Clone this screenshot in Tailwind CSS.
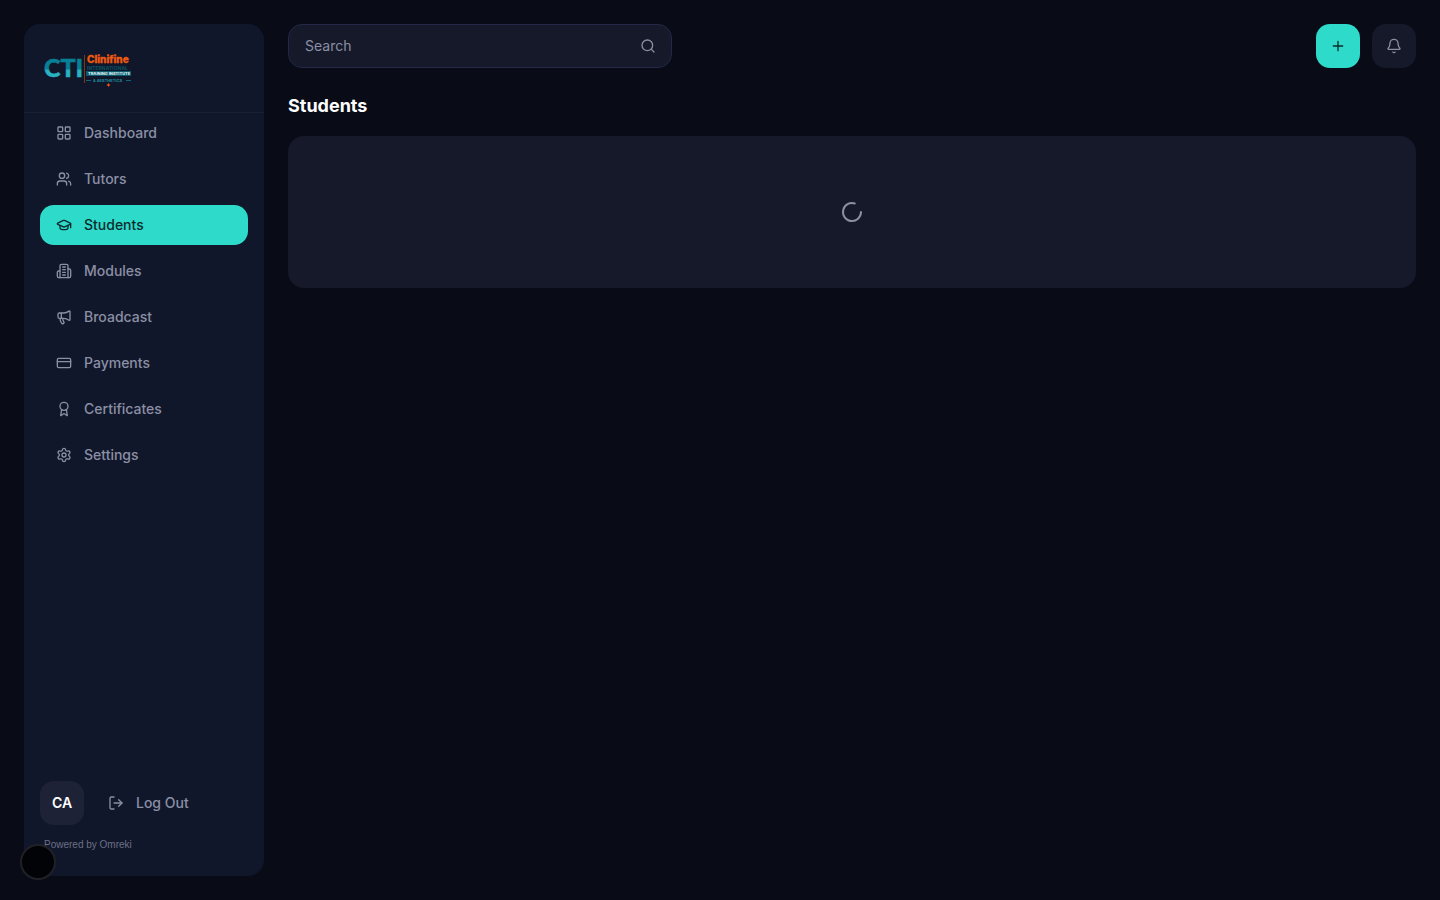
<!DOCTYPE html>
<html lang="en">
  <head>
    <meta charset="UTF-8" />
    <meta name="viewport" content="width=device-width, initial-scale=1.0" />
    <title>Students</title>
    <script src="https://cdn.jsdelivr.net/npm/@tailwindcss/browser@4"></script>
  </head>
  <body class="bg-[#090c17] text-white font-['Inter',sans-serif] antialiased">
    <div class="flex min-h-screen gap-6 p-6">
      <!-- Sidebar -->
      <aside class="flex w-60 shrink-0 flex-col rounded-2xl bg-[#11172a]">
        <div class="border-b border-[#1a2035] px-5 pt-6 pb-4">
          <a href="/" class="block" aria-label="Clinifine Training Institute">
            <svg class="h-12 w-24" viewBox="0 0 96 48">
              <defs>
                <linearGradient id="cti" x1="0" y1="0" x2="0" y2="1">
                  <stop offset="0.55" stop-color="#087f94" />
                  <stop offset="0.62" stop-color="#29b2c2" />
                </linearGradient>
              </defs>
              <text x="0" y="29" fill="url(#cti)" stroke="url(#cti)" stroke-width="0.5" font-family="Lato" font-size="25" font-weight="900">
                CTI
              </text>
              <path d="M40.500 7v28" stroke="#7c351f" stroke-width="1" />
              <text x="43" y="15" fill="#ee5a12" stroke="#ee5a12" stroke-width="0.3" font-family="Inter" font-size="10" font-weight="800">
                Clinifine
              </text>
              <text x="43" y="22" fill="#0b5265" font-family="Inter" font-size="5" font-weight="700">
                INTERNATIONAL
              </text>
              <rect x="42" y="23" width="45" height="5" fill="#0b5a6c" />
              <text x="44" y="27" fill="#d7eef2" font-family="Inter" font-size="4" font-weight="800">
                TRAINING INSTITUTE
              </text>
              <path d="M42 32.500h5M82 32.500h5" stroke="#126578" />
              <text x="49" y="34" fill="#1c8b9c" font-family="Inter" font-size="4" font-weight="700">
                &amp; AESTHETICS
              </text>
              <path d="M64.500 35l.7 1.300 1.300.7-1.300.7-.7 1.300-.7-1.300-1.300-.7 1.300-.7z" fill="#ee5a12" />
            </svg>
          </a>
        </div>

        <!-- Navigation -->
        <nav class="flex flex-col gap-1.5 px-4 text-sm font-medium text-[#8b8fa5]">
          <a href="/dashboard" class="flex h-10 items-center gap-3 rounded-[14px] px-4">
            <svg class="size-4" viewBox="0 0 24 24" fill="none" stroke="currentColor" stroke-width="2" stroke-linecap="round" stroke-linejoin="round">
              <rect x="3" y="3" width="7" height="7" rx="1" />
              <rect x="14" y="3" width="7" height="7" rx="1" />
              <rect x="14" y="14" width="7" height="7" rx="1" />
              <rect x="3" y="14" width="7" height="7" rx="1" />
            </svg>
            Dashboard
          </a>
          <a href="/tutors" class="flex h-10 items-center gap-3 rounded-[14px] px-4">
            <svg class="size-4" viewBox="0 0 24 24" fill="none" stroke="currentColor" stroke-width="2" stroke-linecap="round" stroke-linejoin="round">
              <path d="M16 21v-2a4 4 0 0 0-4-4H6a4 4 0 0 0-4 4v2" />
              <circle cx="9" cy="7" r="4" />
              <path d="M22 21v-2a4 4 0 0 0-3-3.870M16 3.130a4 4 0 0 1 0 7.750" />
            </svg>
            Tutors
          </a>
          <a href="/students" class="flex h-10 items-center gap-3 rounded-[14px] bg-[#2edbca] px-4 text-[#0b2a2c]" aria-current="page">
            <svg class="size-4" viewBox="0 0 24 24" fill="none" stroke="currentColor" stroke-width="2" stroke-linecap="round" stroke-linejoin="round">
              <path d="M21.420 10.922a1 1 0 0 0-.019-1.838L12.830 5.180a2 2 0 0 0-1.660 0L2.600 9.080a1 1 0 0 0 0 1.832l8.570 3.908a2 2 0 0 0 1.660 0z" />
              <path d="M22 10v6" />
              <path d="M6 12.500V16a6 3 0 0 0 12 0v-3.500" />
            </svg>
            Students
          </a>
          <a href="/modules" class="flex h-10 items-center gap-3 rounded-[14px] px-4">
            <svg class="size-4" viewBox="0 0 24 24" fill="none" stroke="currentColor" stroke-width="2" stroke-linecap="round" stroke-linejoin="round">
              <path d="M6 22V4a2 2 0 0 1 2-2h8a2 2 0 0 1 2 2v18Z" />
              <path d="M6 12H4a2 2 0 0 0-2 2v6a2 2 0 0 0 2 2h2" />
              <path d="M18 9h2a2 2 0 0 1 2 2v9a2 2 0 0 1-2 2h-2" />
              <path d="M10 6h4M10 10h4M10 14h4M10 18h4" />
            </svg>
            Modules
          </a>
          <a href="/broadcast" class="flex h-10 items-center gap-3 rounded-[14px] px-4">
            <svg class="size-4" viewBox="0 0 24 24" fill="none" stroke="currentColor" stroke-width="2" stroke-linecap="round" stroke-linejoin="round">
              <path d="M11 6a13 13 0 0 0 8.400-2.800A1 1 0 0 1 21 4v12a1 1 0 0 1-1.600.8A13 13 0 0 0 11 14H5a2 2 0 0 1-2-2V8a2 2 0 0 1 2-2z" />
              <path d="M6 14a12 12 0 0 0 2.400 7.200 2 2 0 0 0 3.200-2.400A8 8 0 0 1 10 14" />
              <path d="M8 6v8" />
            </svg>
            Broadcast
          </a>
          <a href="/payments" class="flex h-10 items-center gap-3 rounded-[14px] px-4">
            <svg class="size-4" viewBox="0 0 24 24" fill="none" stroke="currentColor" stroke-width="2" stroke-linecap="round" stroke-linejoin="round">
              <rect x="2" y="5" width="20" height="14" rx="2" />
              <path d="M2 10h20" />
            </svg>
            Payments
          </a>
          <a href="/certificates" class="flex h-10 items-center gap-3 rounded-[14px] px-4">
            <svg class="size-4" viewBox="0 0 24 24" fill="none" stroke="currentColor" stroke-width="2" stroke-linecap="round" stroke-linejoin="round">
              <path d="m15.477 12.890 1.515 8.526a.5.5 0 0 1-.810.470l-3.580-2.687a1 1 0 0 0-1.197 0l-3.586 2.686a.5.5 0 0 1-.810-.469l1.514-8.526" />
              <circle cx="12" cy="8" r="6" />
            </svg>
            Certificates
          </a>
          <a href="/settings" class="flex h-10 items-center gap-3 rounded-[14px] px-4">
            <svg class="size-4" viewBox="0 0 24 24" fill="none" stroke="currentColor" stroke-width="2" stroke-linecap="round" stroke-linejoin="round">
              <path d="M9.671 4.136a2.340 2.340 0 0 1 4.659 0 2.340 2.340 0 0 0 3.319 1.915 2.340 2.340 0 0 1 2.330 4.033 2.340 2.340 0 0 0 0 3.831 2.340 2.340 0 0 1-2.330 4.033 2.340 2.340 0 0 0-3.319 1.915 2.340 2.340 0 0 1-4.659 0 2.340 2.340 0 0 0-3.320-1.915 2.340 2.340 0 0 1-2.330-4.033 2.340 2.340 0 0 0 0-3.831A2.340 2.340 0 0 1 6.350 6.051a2.340 2.340 0 0 0 3.319-1.915" />
              <circle cx="12" cy="12" r="3" />
            </svg>
            Settings
          </a>
        </nav>

        <!-- Account -->
        <div class="mt-auto px-4 pb-6">
          <div class="flex items-center gap-2">
            <div class="flex size-11 items-center justify-center rounded-[14px] bg-[#1d2236] text-sm font-semibold">CA</div>
            <button type="button" class="flex h-10 items-center gap-3 px-4 text-sm font-medium text-[#8b8fa5]">
              <svg class="size-4" viewBox="0 0 24 24" fill="none" stroke="currentColor" stroke-width="2" stroke-linecap="round" stroke-linejoin="round">
                <path d="M9 21H5a2 2 0 0 1-2-2V5a2 2 0 0 1 2-2h4" />
                <path d="m16 17 5-5-5-5" />
                <path d="M21 12H9" />
              </svg>
              Log Out
            </button>
          </div>
          <p class="mt-3 px-1 font-['Liberation_Sans',sans-serif] text-[10px] leading-[15px] text-[#6c7085]">Powered by Omreki</p>
        </div>
      </aside>

      <!-- Content -->
      <main class="min-w-0 flex-1">
        <header class="flex items-center justify-between">
          <label class="flex h-11 w-96 items-center rounded-[14px] border border-[#232848] bg-[#161929] px-4 text-[#8b8fa5]">
            <input type="text" placeholder="Search" aria-label="Search" class="min-w-0 flex-1 bg-transparent text-sm outline-none placeholder:text-[#8b8fa5]" />
            <svg class="size-4 -mr-px" viewBox="0 0 24 24" fill="none" stroke="currentColor" stroke-width="2" stroke-linecap="round" stroke-linejoin="round">
              <circle cx="11" cy="11" r="8" />
              <path d="m21 21-4.300-4.300" />
            </svg>
          </label>
          <div class="flex gap-3">
            <button type="button" aria-label="Add student" class="flex size-11 items-center justify-center rounded-[14px] bg-[#2edbca] text-[#0b2a2c]">
              <svg class="size-4" viewBox="0 0 24 24" fill="none" stroke="currentColor" stroke-width="2" stroke-linecap="round">
                <path d="M5 12h14M12 5v14" />
              </svg>
            </button>
            <button type="button" aria-label="Notifications" class="flex size-11 items-center justify-center rounded-[14px] bg-[#161929] text-[#8b8fa5]">
              <svg class="size-4" viewBox="0 0 24 24" fill="none" stroke="currentColor" stroke-width="2" stroke-linecap="round" stroke-linejoin="round">
                <path d="M10.268 21a2 2 0 0 0 3.464 0" />
                <path d="M3.262 15.326A1 1 0 0 0 4 17h16a1 1 0 0 0 .740-1.673C19.410 13.956 18 12.499 18 8A6 6 0 0 0 6 8c0 4.499-1.411 5.956-2.738 7.326" />
              </svg>
            </button>
          </div>
        </header>

        <h1 class="mt-6 text-lg font-bold">Students</h1>
        <section class="mt-4 flex items-center justify-center rounded-2xl bg-[#161929] py-16" aria-busy="true">
          <svg class="size-6 text-[#8b8fa5]" viewBox="0 0 24 24" fill="none" stroke="currentColor" stroke-width="2" stroke-linecap="round">
            <path d="M21 12a9 9 0 1 1-6.219-8.560" />
          </svg>
        </section>
      </main>
    </div>

    <!-- Floating button -->
    <button type="button" aria-label="Open tools" class="fixed bottom-5 left-5 size-9 rounded-full border-2 border-[#202127] bg-[#020307]"></button>
  </body>
</html>
